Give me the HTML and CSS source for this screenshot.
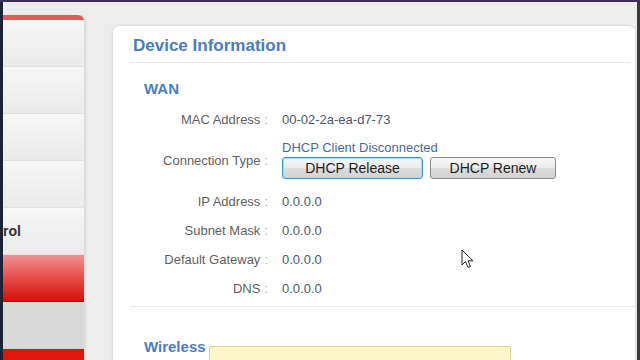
FILE: index.html
```html
<!DOCTYPE html>
<html lang="en">
<head>
    <meta charset="UTF-8">
    <title>Device Information</title>
    <link rel="stylesheet" href="styles.css">
</head>
<body>
    <div class="topline"></div>
    <div class="frame">
        <!-- Left menu (scrolled, only the edge is visible) -->
        <ul class="sidebar">
            <li class="item"></li>
            <li class="item"></li>
            <li class="item"></li>
            <li class="item"></li>
            <li class="item"><span>Parental Control</span></li>
            <li class="item active"></li>
            <li class="item hover"></li>
            <li class="item current"><span>Administration</span></li>
        </ul>

        <!-- Main panel -->
        <div class="panel">
            <h2 class="panel-title">Device Information</h2>

            <div class="section wan">
                <h3>WAN</h3>
                <div class="rows">
                    <div class="label">MAC Address <i>:</i></div>
                    <div class="value">00-02-2a-ea-d7-73</div>

                    <div class="label">Connection Type <i>:</i></div>
                    <div class="value conn">
                        <div class="status">DHCP Client Disconnected</div>
                        <div class="buttons">
                            <button class="btn release">DHCP Release</button>
                            <button class="btn renew">DHCP Renew</button>
                        </div>
                    </div>

                    <div class="label">IP Address <i>:</i></div>
                    <div class="value">0.0.0.0</div>

                    <div class="label">Subnet Mask <i>:</i></div>
                    <div class="value">0.0.0.0</div>

                    <div class="label">Default Gateway <i>:</i></div>
                    <div class="value">0.0.0.0</div>

                    <div class="label">DNS <i>:</i></div>
                    <div class="value">0.0.0.0</div>
                </div>
            </div>

            <div class="section wireless">
                <h3>Wireless</h3>
                <div class="note"></div>
            </div>

            <!-- mouse pointer -->
            <svg class="cursor" width="14" height="21" viewBox="0 0 14 21">
                <path d="M1 1 L1 16 L4.5 12.5 L7 18.5 L9.5 17.5 L7 11.8 L12 11.8 Z" fill="#fff" stroke="#222" stroke-width="1" stroke-linejoin="round"/>
            </svg>
        </div>
    </div>
</body>
</html>
```

FILE: styles.css
```css
/* Global styles */
body {
    margin: 0;
    height: 360px;
    overflow: hidden;
    font-family: "Liberation Sans", Arial, sans-serif;
    background-color: #ededed;
}

.topline {
    height: 2px;
    background: #3d2e5c;
}

.frame {
    display: flex;
    height: 358px;
    border-left: 3px solid #1d2333;
    border-right: 3px solid #3a3a3a;
}

/* Sidebar menu */
.sidebar {
    list-style: none;
    margin: 13px 0 0 0;
    padding: 0;
    width: 81px;
    flex-shrink: 0;
    border-top: 5px solid #e25a5a;
    border-top-right-radius: 6px;
    background: #eeeeee;
    box-shadow: 2px 0 2px rgba(0, 0, 0, 0.08);
    overflow: hidden;
}

.item {
    height: 46px;
    display: flex;
    justify-content: flex-end;
    align-items: center;
    padding-right: 63px;
    border-bottom: 1px solid #e2e2e2;
    background: linear-gradient(to bottom, #f7f7f7, #ebebeb);
    font-size: 14px;
    font-weight: bold;
    color: #333;
    white-space: nowrap;
    overflow: hidden;
}

.item span {
    flex-shrink: 0;
}

.item.active {
    background: linear-gradient(to bottom, #f29191, #e4403a 60%, #d4100a);
    border-bottom: 1px solid #b30d08;
}

.item.hover {
    background: #d9d9d9;
    border-bottom-color: #d0d0d0;
}

.item.current {
    background: #e2150d;
    color: #fff;
    align-items: flex-start;
    padding-top: 9px;
}

/* Main panel */
.panel {
    position: relative;
    flex: 1;
    margin: 24px 2px 0 29px;
    background: #ffffff;
    border-radius: 6px 6px 0 0;
    box-shadow: 0 0 3px rgba(0, 0, 0, 0.14);
}

.panel-title {
    margin: 0 5px 0 17px;
    padding: 10px 0 6px 3px;
    font-size: 17px;
    line-height: 20px;
    color: #4b7cbd;
    border-bottom: 1px solid #e6e6e6;
}

.section {
    margin-left: 17px;
    padding-left: 14px;
}

.section h3 {
    margin: 0;
    font-size: 15px;
    line-height: 20px;
    color: #4b7cbd;
}

.wan {
    padding-bottom: 3px;
    border-bottom: 1px solid #e8e8e8;
}

.wan h3 {
    margin-top: 16px;
    margin-bottom: 6px;
}

/* Info rows */
.rows {
    display: grid;
    grid-template-columns: 124px 1fr;
    grid-template-rows: 29px 53px;
    grid-auto-rows: 29px;
    column-gap: 14px;
    font-size: 13px;
}

.label {
    display: flex;
    align-items: center;
    justify-content: flex-end;
    color: #5f5f5f;
    white-space: nowrap;
}

.label i {
    font-style: normal;
    color: #aaa;
    margin-left: 4px;
}

.value {
    display: flex;
    align-items: center;
    color: #4d586f;
}

.conn {
    flex-direction: column;
    align-items: flex-start;
    justify-content: flex-start;
    padding-top: 6px;
}

.status {
    color: #4a68a0;
    line-height: 16px;
}

.buttons {
    display: flex;
    gap: 7px;
    margin-top: 1px;
}

/* Button styles */
.btn {
    height: 22px;
    padding: 0;
    font-family: "Liberation Sans", Arial, sans-serif;
    font-size: 14px;
    color: #1e1e1e;
    border: 1px solid #8c8c8c;
    border-radius: 3px;
    background: linear-gradient(to bottom, #f7f7f7, #ececec 50%, #dddddd 51%, #d2d2d2);
}

.release {
    width: 141px;
    border-color: #3d98cf;
    box-shadow: inset 0 0 0 1px #a9dbf3;
}

.renew {
    width: 126px;
}

.wireless {
    position: relative;
    margin-top: 30px;
}

.note {
    position: absolute;
    left: 79px;
    top: 9px;
    width: 300px;
    height: 30px;
    background: #fcf6c8;
    border: 1px solid #e2d48c;
    border-radius: 2px;
}

.cursor {
    position: absolute;
    left: 348px;
    top: 223px;
}
```
